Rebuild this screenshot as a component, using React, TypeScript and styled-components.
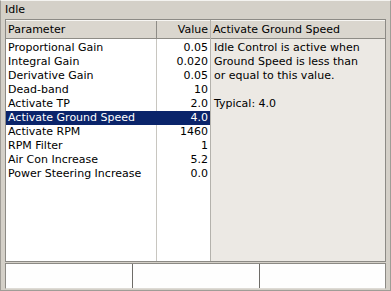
import React from 'react';
import styled, { createGlobalStyle } from 'styled-components';

const GlobalStyle = createGlobalStyle`
	html, body {
		margin: 0;
		padding: 0;
		background: #d4d0c8;
	}
	* {
		box-sizing: border-box;
	}
`;

const Frame = styled.div`
	width: 391px;
	height: 291px;
	background: #d4d0c8;
	border: 1px solid #a09d97;
	border-top-color: #f4f3f0;
	font-family: 'DejaVu Sans', Verdana, sans-serif;
	font-size: 11px;
	color: #000;
	display: flex;
	flex-direction: column;
	padding: 0 4px;
`;

const Caption = styled.div`
	height: 18px;
	line-height: 17px;
`;

const GridBox = styled.div`
	height: 243px;
	border: 1px solid #8c8a85;
	display: flex;
	background: #fff;
`;

const ListPane = styled.div`
	width: 204px;
	display: flex;
	flex-direction: column;
`;

const HeaderRow = styled.div`
	display: flex;
	height: 19px;
	background: #dad6ce;
	border-top: 1px solid #f7f6f3;
	border-bottom: 1px solid #8e8c86;
`;

const HeaderCell = styled.div<{ $w?: number; $right?: boolean; $divider?: boolean }>`
	width: ${(p) => (p.$w ? `${p.$w}px` : 'auto')};
	flex: ${(p) => (p.$w ? 'none' : '1')};
	text-align: ${(p) => (p.$right ? 'right' : 'left')};
	padding: 0 2px;
	line-height: 17px;
	border-right: ${(p) => (p.$divider ? '1px solid #8e8c86' : 'none')};
	white-space: nowrap;
	overflow: hidden;
`;

const Body = styled.div`
	flex: 1;
	padding-top: 2px;
	background: linear-gradient(to right, transparent 150px, #c8c6c0 150px, #c8c6c0 151px, transparent 151px);
`;

const Row = styled.div<{ $selected?: boolean }>`
	display: flex;
	height: 14px;
	line-height: 14px;
	background: ${(p) => (p.$selected ? '#0a246a' : 'transparent')};
	color: ${(p) => (p.$selected ? '#fff' : '#000')};
`;

const NameCell = styled.div`
	width: 151px;
	padding-left: 2px;
	white-space: nowrap;
`;

const ValueCell = styled.div`
	flex: 1;
	text-align: right;
	padding-right: 2px;
`;

const DescPane = styled.div`
	flex: 1;
	display: flex;
	flex-direction: column;
	border-left: 1px solid #b4b2ac;
	background: #ece9e4;
`;

const DescText = styled.div`
	padding: 2px 3px 0 3px;
	line-height: 14px;
`;

const StatusBar = styled.div`
	margin-top: 1px;
	height: 26px;
	display: grid;
	grid-template-columns: 127px 127px 1fr;
	border: 1px solid #8c8a85;
	border-bottom-color: #dedbd5;
	background: #fefefe;
`;

const StatusPanel = styled.div<{ $last?: boolean }>`
	border-right: ${(p) => (p.$last ? 'none' : '1px solid #6e6c68')};
`;

type Param = { name: string; value: string };

const params: Param[] = [
	{ name: 'Proportional Gain', value: '0.05' },
	{ name: 'Integral Gain', value: '0.020' },
	{ name: 'Derivative Gain', value: '0.05' },
	{ name: 'Dead-band', value: '10' },
	{ name: 'Activate TP', value: '2.0' },
	{ name: 'Activate Ground Speed', value: '4.0' },
	{ name: 'Activate RPM', value: '1460' },
	{ name: 'RPM Filter', value: '1' },
	{ name: 'Air Con Increase', value: '5.2' },
	{ name: 'Power Steering Increase', value: '0.0' },
];

const selected = 'Activate Ground Speed';

function App() {
	return (
		<>
			<GlobalStyle />
			<Frame>
				<Caption>Idle</Caption>
				<GridBox>
					<ListPane>
						<HeaderRow>
							<HeaderCell $w={151} $divider>
								Parameter
							</HeaderCell>
							<HeaderCell $right>Value</HeaderCell>
						</HeaderRow>
						<Body>
							{params.map((p) => (
								<Row key={p.name} $selected={p.name === selected}>
									<NameCell>{p.name}</NameCell>
									<ValueCell>{p.value}</ValueCell>
								</Row>
							))}
						</Body>
					</ListPane>
					<DescPane>
						<HeaderRow>
							<HeaderCell>Activate Ground Speed</HeaderCell>
						</HeaderRow>
						<DescText>
							Idle Control is active when
							<br />
							Ground Speed is less than
							<br />
							or equal to this value.
							<br />
							<br />
							Typical: 4.0
						</DescText>
					</DescPane>
				</GridBox>
				<StatusBar>
					<StatusPanel />
					<StatusPanel />
					<StatusPanel $last />
				</StatusBar>
			</Frame>
		</>
	);
}

export default App;
